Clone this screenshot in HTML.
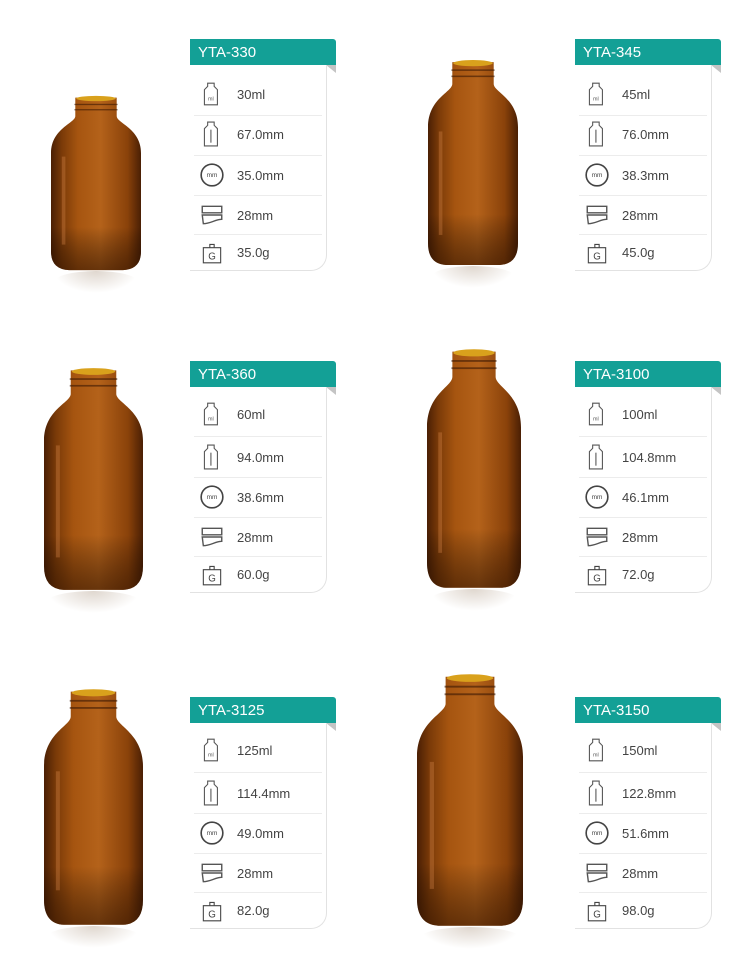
<!DOCTYPE html>
<html><head><meta charset="utf-8">
<style>
body{margin:0;width:741px;height:975px;background:#fff;position:relative;overflow:hidden;font-family:"Liberation Sans",sans-serif}
.b{position:absolute}
.r{position:absolute;height:22px;border-radius:50%;background:radial-gradient(ellipse at center top,rgba(140,110,80,.28),rgba(255,255,255,0) 70%)}
.card{position:absolute;width:146px;height:232px}
.hd{position:absolute;left:0;top:0;width:146px;height:26px;background:#13a096;color:#fff;font-size:15px;line-height:27px;padding-left:8px;box-sizing:border-box;border-top-right-radius:3px}
.fold{position:absolute;left:136px;top:26px;width:0;height:0;border-left:10px solid transparent;border-top:8px solid #c4c4c4}
.body{position:absolute;left:0;top:26px;width:137px;height:206px;border-right:1px solid #e2e2e2;border-bottom:1px solid #e2e2e2;border-bottom-right-radius:16px;box-sizing:border-box}
.row{position:absolute;left:0;width:132px;height:40px}
.row svg{position:absolute;left:9px;top:7px}
.row span{position:absolute;left:47px;top:13px;font-size:13px;color:#444}
.sep{position:absolute;left:4px;width:128px;height:1px;background:#ececec}
</style></head><body>

<svg width="0" height="0" style="position:absolute"><defs>
<linearGradient id="g" x1="0" x2="1" y1="0" y2="0">
<stop offset="0" stop-color="#4a1f04"/><stop offset="0.12" stop-color="#7a3a08"/><stop offset="0.3" stop-color="#a65510"/><stop offset="0.55" stop-color="#b4621a"/><stop offset="0.85" stop-color="#8a420a"/><stop offset="1" stop-color="#4a1f04"/></linearGradient>
<linearGradient id="gv" x1="0" x2="0" y1="0" y2="1">
<stop offset="0.75" stop-color="#000" stop-opacity="0"/><stop offset="1" stop-color="#2a1000" stop-opacity="0.55"/></linearGradient>
<symbol id="bt" viewBox="0 0 100 200" preserveAspectRatio="none">
<path d="M27,3 H73 V24 C73,32 100,38 100,66 V178 Q100,198 80,199 H20 Q0,198 0,178 V66 C0,38 27,32 27,24 Z" fill="url(#g)"/>
<path d="M27,3 H73 V24 C73,32 100,38 100,66 V178 Q100,198 80,199 H20 Q0,198 0,178 V66 C0,38 27,32 27,24 Z" fill="url(#gv)"/>
<ellipse cx="50" cy="4" rx="22" ry="3" fill="#d9a11c"/>
<rect x="26" y="10" width="48" height="1.5" fill="#3a1804" opacity=".6"/>
<rect x="26" y="16" width="48" height="1.5" fill="#3a1804" opacity=".6"/>
<rect x="12" y="70" width="4" height="100" fill="#d8884a" opacity=".35"/>
</symbol>
</defs></svg>

<!-- bottles -->
<div class="r" style="left:54px;top:271px;width:84px"></div>
<div class="r" style="left:431px;top:266px;width:84px"></div>
<div class="r" style="left:47px;top:591px;width:93px"></div>
<div class="r" style="left:430px;top:589px;width:88px"></div>
<div class="r" style="left:47px;top:926px;width:93px"></div>
<div class="r" style="left:420px;top:927px;width:100px"></div>
<svg class="b" style="left:51px;top:95px" width="90" height="176"><use href="#bt" width="90" height="176"/></svg>
<svg class="b" style="left:428px;top:59px" width="90" height="207"><use href="#bt" width="90" height="207"/></svg>
<svg class="b" style="left:44px;top:367px" width="99" height="224"><use href="#bt" width="99" height="224"/></svg>
<svg class="b" style="left:427px;top:348px" width="94" height="241"><use href="#bt" width="94" height="241"/></svg>
<svg class="b" style="left:44px;top:688px" width="99" height="238"><use href="#bt" width="99" height="238"/></svg>
<svg class="b" style="left:417px;top:673px" width="106" height="254"><use href="#bt" width="106" height="254"/></svg>

<!-- cards -->
<div class="card" style="left:190px;top:39px">
<div class="hd">YTA-330</div><div class="fold"></div><div class="body"></div>
<div class="row" style="top:35px"><svg width="26" height="26" viewBox="0 0 24 24"><path d="M8,2h6v3l3,3v14h-12v-14l3,-3z" fill="none" stroke="#555"/><text x="11" y="18" font-size="5" text-anchor="middle" fill="#555">ml</text></svg><span>30ml</span></div>
<div class="sep" style="top:76px"></div>
<div class="row" style="top:75px"><svg width="26" height="26" viewBox="0 0 24 24"><path d="M8,1h6v3l3,3v16h-12v-16l3,-3z" fill="none" stroke="#555"/><path d="M11,8v12" stroke="#555"/></svg><span>67.0mm</span></div>
<div class="sep" style="top:116px"></div>
<div class="row" style="top:116px"><svg width="26" height="26" viewBox="0 0 24 24"><circle cx="12" cy="12" r="10" fill="none" stroke="#444" stroke-width="1.5"/><text x="12" y="14" font-size="6" text-anchor="middle" fill="#444">mm</text></svg><span>35.0mm</span></div>
<div class="sep" style="top:156px"></div>
<div class="row" style="top:156px"><svg width="26" height="26" viewBox="0 0 24 24"><path d="M3,4h18v6h-18z M3,12h18v4c-6,0 -10,4 -17,4z" fill="none" stroke="#555" stroke-width="1.3"/></svg><span>28mm</span></div>
<div class="sep" style="top:195px"></div>
<div class="row" style="top:193px"><svg width="26" height="26" viewBox="0 0 24 24"><path d="M4,8h16v14h-16z M10,8v-3h4v3" fill="none" stroke="#444"/><text x="12" y="19" font-size="9" text-anchor="middle" fill="#444">G</text></svg><span>35.0g</span></div>
</div>

<div class="card" style="left:575px;top:39px">
<div class="hd">YTA-345</div><div class="fold"></div><div class="body"></div>
<div class="row" style="top:35px"><svg width="26" height="26" viewBox="0 0 24 24"><path d="M8,2h6v3l3,3v14h-12v-14l3,-3z" fill="none" stroke="#555"/><text x="11" y="18" font-size="5" text-anchor="middle" fill="#555">ml</text></svg><span>45ml</span></div>
<div class="sep" style="top:76px"></div>
<div class="row" style="top:75px"><svg width="26" height="26" viewBox="0 0 24 24"><path d="M8,1h6v3l3,3v16h-12v-16l3,-3z" fill="none" stroke="#555"/><path d="M11,8v12" stroke="#555"/></svg><span>76.0mm</span></div>
<div class="sep" style="top:116px"></div>
<div class="row" style="top:116px"><svg width="26" height="26" viewBox="0 0 24 24"><circle cx="12" cy="12" r="10" fill="none" stroke="#444" stroke-width="1.5"/><text x="12" y="14" font-size="6" text-anchor="middle" fill="#444">mm</text></svg><span>38.3mm</span></div>
<div class="sep" style="top:156px"></div>
<div class="row" style="top:156px"><svg width="26" height="26" viewBox="0 0 24 24"><path d="M3,4h18v6h-18z M3,12h18v4c-6,0 -10,4 -17,4z" fill="none" stroke="#555" stroke-width="1.3"/></svg><span>28mm</span></div>
<div class="sep" style="top:195px"></div>
<div class="row" style="top:193px"><svg width="26" height="26" viewBox="0 0 24 24"><path d="M4,8h16v14h-16z M10,8v-3h4v3" fill="none" stroke="#444"/><text x="12" y="19" font-size="9" text-anchor="middle" fill="#444">G</text></svg><span>45.0g</span></div>
</div>

<div class="card" style="left:190px;top:361px">
<div class="hd">YTA-360</div><div class="fold"></div><div class="body"></div>
<div class="row" style="top:33px"><svg width="26" height="26" viewBox="0 0 24 24"><path d="M8,2h6v3l3,3v14h-12v-14l3,-3z" fill="none" stroke="#555"/><text x="11" y="18" font-size="5" text-anchor="middle" fill="#555">ml</text></svg><span>60ml</span></div>
<div class="sep" style="top:75px"></div>
<div class="row" style="top:76px"><svg width="26" height="26" viewBox="0 0 24 24"><path d="M8,1h6v3l3,3v16h-12v-16l3,-3z" fill="none" stroke="#555"/><path d="M11,8v12" stroke="#555"/></svg><span>94.0mm</span></div>
<div class="sep" style="top:116px"></div>
<div class="row" style="top:116px"><svg width="26" height="26" viewBox="0 0 24 24"><circle cx="12" cy="12" r="10" fill="none" stroke="#444" stroke-width="1.5"/><text x="12" y="14" font-size="6" text-anchor="middle" fill="#444">mm</text></svg><span>38.6mm</span></div>
<div class="sep" style="top:156px"></div>
<div class="row" style="top:156px"><svg width="26" height="26" viewBox="0 0 24 24"><path d="M3,4h18v6h-18z M3,12h18v4c-6,0 -10,4 -17,4z" fill="none" stroke="#555" stroke-width="1.3"/></svg><span>28mm</span></div>
<div class="sep" style="top:195px"></div>
<div class="row" style="top:193px"><svg width="26" height="26" viewBox="0 0 24 24"><path d="M4,8h16v14h-16z M10,8v-3h4v3" fill="none" stroke="#444"/><text x="12" y="19" font-size="9" text-anchor="middle" fill="#444">G</text></svg><span>60.0g</span></div>
</div>

<div class="card" style="left:575px;top:361px">
<div class="hd">YTA-3100</div><div class="fold"></div><div class="body"></div>
<div class="row" style="top:33px"><svg width="26" height="26" viewBox="0 0 24 24"><path d="M8,2h6v3l3,3v14h-12v-14l3,-3z" fill="none" stroke="#555"/><text x="11" y="18" font-size="5" text-anchor="middle" fill="#555">ml</text></svg><span>100ml</span></div>
<div class="sep" style="top:75px"></div>
<div class="row" style="top:76px"><svg width="26" height="26" viewBox="0 0 24 24"><path d="M8,1h6v3l3,3v16h-12v-16l3,-3z" fill="none" stroke="#555"/><path d="M11,8v12" stroke="#555"/></svg><span>104.8mm</span></div>
<div class="sep" style="top:116px"></div>
<div class="row" style="top:116px"><svg width="26" height="26" viewBox="0 0 24 24"><circle cx="12" cy="12" r="10" fill="none" stroke="#444" stroke-width="1.5"/><text x="12" y="14" font-size="6" text-anchor="middle" fill="#444">mm</text></svg><span>46.1mm</span></div>
<div class="sep" style="top:156px"></div>
<div class="row" style="top:156px"><svg width="26" height="26" viewBox="0 0 24 24"><path d="M3,4h18v6h-18z M3,12h18v4c-6,0 -10,4 -17,4z" fill="none" stroke="#555" stroke-width="1.3"/></svg><span>28mm</span></div>
<div class="sep" style="top:195px"></div>
<div class="row" style="top:193px"><svg width="26" height="26" viewBox="0 0 24 24"><path d="M4,8h16v14h-16z M10,8v-3h4v3" fill="none" stroke="#444"/><text x="12" y="19" font-size="9" text-anchor="middle" fill="#444">G</text></svg><span>72.0g</span></div>
</div>

<div class="card" style="left:190px;top:697px">
<div class="hd">YTA-3125</div><div class="fold"></div><div class="body"></div>
<div class="row" style="top:33px"><svg width="26" height="26" viewBox="0 0 24 24"><path d="M8,2h6v3l3,3v14h-12v-14l3,-3z" fill="none" stroke="#555"/><text x="11" y="18" font-size="5" text-anchor="middle" fill="#555">ml</text></svg><span>125ml</span></div>
<div class="sep" style="top:75px"></div>
<div class="row" style="top:76px"><svg width="26" height="26" viewBox="0 0 24 24"><path d="M8,1h6v3l3,3v16h-12v-16l3,-3z" fill="none" stroke="#555"/><path d="M11,8v12" stroke="#555"/></svg><span>114.4mm</span></div>
<div class="sep" style="top:116px"></div>
<div class="row" style="top:116px"><svg width="26" height="26" viewBox="0 0 24 24"><circle cx="12" cy="12" r="10" fill="none" stroke="#444" stroke-width="1.5"/><text x="12" y="14" font-size="6" text-anchor="middle" fill="#444">mm</text></svg><span>49.0mm</span></div>
<div class="sep" style="top:156px"></div>
<div class="row" style="top:156px"><svg width="26" height="26" viewBox="0 0 24 24"><path d="M3,4h18v6h-18z M3,12h18v4c-6,0 -10,4 -17,4z" fill="none" stroke="#555" stroke-width="1.3"/></svg><span>28mm</span></div>
<div class="sep" style="top:195px"></div>
<div class="row" style="top:193px"><svg width="26" height="26" viewBox="0 0 24 24"><path d="M4,8h16v14h-16z M10,8v-3h4v3" fill="none" stroke="#444"/><text x="12" y="19" font-size="9" text-anchor="middle" fill="#444">G</text></svg><span>82.0g</span></div>
</div>

<div class="card" style="left:575px;top:697px">
<div class="hd">YTA-3150</div><div class="fold"></div><div class="body"></div>
<div class="row" style="top:33px"><svg width="26" height="26" viewBox="0 0 24 24"><path d="M8,2h6v3l3,3v14h-12v-14l3,-3z" fill="none" stroke="#555"/><text x="11" y="18" font-size="5" text-anchor="middle" fill="#555">ml</text></svg><span>150ml</span></div>
<div class="sep" style="top:75px"></div>
<div class="row" style="top:76px"><svg width="26" height="26" viewBox="0 0 24 24"><path d="M8,1h6v3l3,3v16h-12v-16l3,-3z" fill="none" stroke="#555"/><path d="M11,8v12" stroke="#555"/></svg><span>122.8mm</span></div>
<div class="sep" style="top:116px"></div>
<div class="row" style="top:116px"><svg width="26" height="26" viewBox="0 0 24 24"><circle cx="12" cy="12" r="10" fill="none" stroke="#444" stroke-width="1.5"/><text x="12" y="14" font-size="6" text-anchor="middle" fill="#444">mm</text></svg><span>51.6mm</span></div>
<div class="sep" style="top:156px"></div>
<div class="row" style="top:156px"><svg width="26" height="26" viewBox="0 0 24 24"><path d="M3,4h18v6h-18z M3,12h18v4c-6,0 -10,4 -17,4z" fill="none" stroke="#555" stroke-width="1.3"/></svg><span>28mm</span></div>
<div class="sep" style="top:195px"></div>
<div class="row" style="top:193px"><svg width="26" height="26" viewBox="0 0 24 24"><path d="M4,8h16v14h-16z M10,8v-3h4v3" fill="none" stroke="#444"/><text x="12" y="19" font-size="9" text-anchor="middle" fill="#444">G</text></svg><span>98.0g</span></div>
</div>

</body></html>
